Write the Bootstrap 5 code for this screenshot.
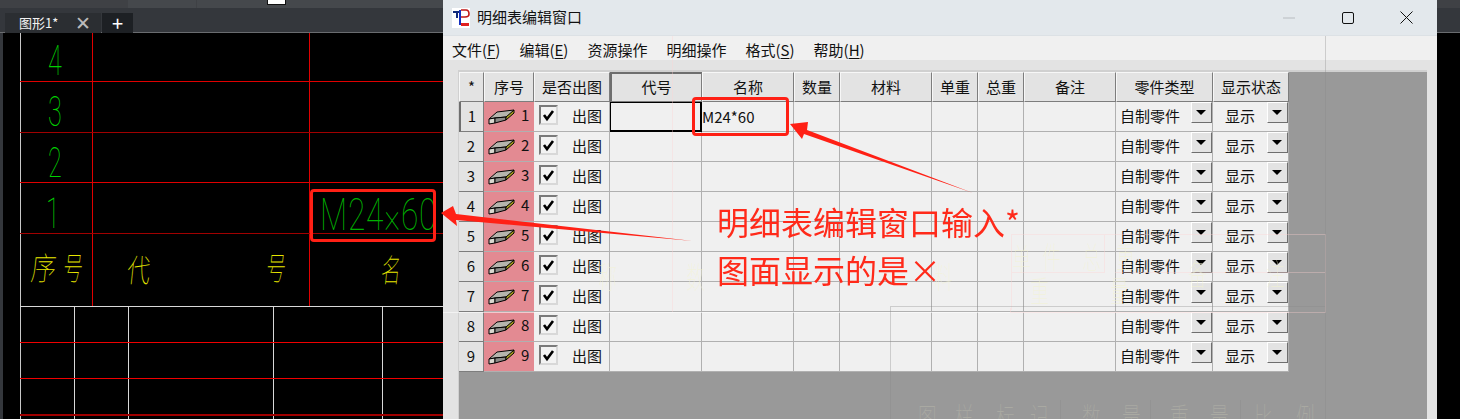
<!DOCTYPE html>
<html lang="zh-CN">
<head>
  <meta charset="UTF-8">
  <title>明细表编辑窗口</title>
  <link href="https://cdn.jsdelivr.net/npm/bootstrap@5.3.0/dist/css/bootstrap.min.css" rel="stylesheet">
  <style>
    html, body { height: 100%; }
    body { background: #000; overflow: hidden; font-family: "Noto Sans CJK SC", "Liberation Sans", sans-serif; }
    #desk { width: 1460px; height: 419px; }

    /* CAD 外框 */
    .cad-top { height: 33px; background: #34373c; border-bottom: 1px solid #6a6c70; }
    .cad-strip { height: 8px; background: #3f4145; overflow: hidden; }
    .strip-a { width: 120px; }
    .strip-b { width: 68px; margin-left: 8px; background: #45484c; }
    .strip-c { width: 880px; margin-left: 1px; background: #45484c; }
    .swatch { width: 19px; height: 5px; background: #fff; border: 1px solid #111; border-top: 0; margin-left: 70px; }
    .cad-tabs { height: 25px; padding: 5px 0 0 5px; }
    .cad-tab { width: 96px; height: 20px; background: #2b2e32; color: #f2f2f2; font-size: 13px; line-height: 20px; padding-left: 14px; }
    .cad-tab b { font-weight: 400; color: #bbb; font-size: 19px; margin-left: 17px; line-height: 18px; }
    .cad-add { width: 31px; height: 20px; margin-left: 1px; background: #1d2024; color: #fff; font-size: 20px; line-height: 19px; text-align: center; }
    .cad-paper { position: absolute; left: 0; top: 33px; }
    .cad-paper text { font-family: Roboto, "Noto Sans CJK SC", sans-serif; font-weight: 100; }
    .cad-paper .cn { font-family: "Noto Sans CJK SC", sans-serif; font-weight: 100; fill: #e6e600; }

    /* 明细表窗口 */
    #mxWin { position: absolute; left: 443px; top: -8px; width: 994px; height: 440px; background: #e3e3e3; border-radius: 8px; overflow: hidden; color: #111; font-size: 15px; }
    .win-title { height: 44px; padding-top: 8px; background: #e3e8ec; border-bottom: 1px solid #dce1e5; }
    .win-logo { margin-left: 9px; margin-right: 7px; }
    .win-btns svg { display: block; }
    .win-menu { height: 24px; background: #f0f0f0; line-height: 28px; padding-left: 9px; gap: 19px; }
    .win-menu u { text-underline-offset: 2px; }
    .grid-wrap { margin: 10px 10px 0 15px; height: 360px; background: #999; border-top: 2px solid #d0d0d0; border-left: 1px solid #d0d0d0; }
    .mx-grid { table-layout: fixed; width: 830px; border-collapse: separate; border-spacing: 0; background: #f0f0f0; }
    .mx-grid th, .mx-grid td { height: 30px; padding: 0; border-right: 1px solid #b0b0b0; border-bottom: 1px solid #b0b0b0; font-weight: 400; line-height: 1; vertical-align: middle; }
    .mx-grid th { background: #e3e3e3; text-align: center; border-right-color: #7d7d7d; border-bottom-color: #7d7d7d; border-top: 1px solid #f7f7f7; border-left: 1px solid #f7f7f7; padding-bottom: 2px; }
    .mx-grid th.cur { border-top: 2px solid #6e6e6e; border-left: 2px solid #6e6e6e; }
    .mx-grid td { background: #f0f0f0; }
    .mx-grid td.rowno { background: #e3e3e3; text-align: center; border-right-color: #7d7d7d; border-bottom-color: #7d7d7d; padding-bottom: 3px; }
    .mx-grid td.rowno.cur { border-left: 2px solid #6e6e6e; }
    .mx-grid td.pink { background: #e38a92; border-right: 0; }
    .mx-grid td.sel { box-shadow: inset 0 0 0 1px #000; border-right-color: #000; border-bottom-color: #000; }
    .cell-in { height: 29px; }
    .part-no { margin-left: 6px; margin-top: -4px; }
    .chk { width: 19px; height: 20px; margin-left: 5px; margin-top: 3px; background: #f3f3f3; border: 2px solid; border-color: #7a7a7a #d8d8d8 #d8d8d8 #7a7a7a; }
    .chk-txt { margin-left: 14px; margin-top: -3px; }
    .val { padding-left: 4px; padding-bottom: 5px; }
    .drop { width: 21px; height: 21px; background: #e3e3e3; border: 1px solid; border-color: #fff #6e6e6e #6e6e6e #fff; position: relative; margin-right: 0; margin-top: 0; }
    .drop::after { content: ""; position: absolute; left: 4px; top: 7px; border: 5px solid transparent; border-top: 5px solid #000; border-bottom: 0; }
    .sel-txt { margin-top: -3px; }

    /* 标注 */
    .mark-box { position: absolute; border: 3px solid #ff2015; border-radius: 4px; }
    #note { position: absolute; left: 717px; top: 197px; color: #ff2a1a; font-size: 32px; line-height: 48px; }
    #ghost, #arrows { position: absolute; left: 0; top: 0; pointer-events: none; }
    #ghost text { font-family: "Noto Sans CJK SC", sans-serif; font-weight: 100; fill: #f3f3cf; font-size: 30px; }
  </style>
</head>
<body>
<div id="desk" class="position-relative overflow-hidden">

  <!-- CAD 顶部 -->
  <div class="cad-top">
    <div class="cad-strip d-flex">
      <div class="strip-a"></div>
      <div class="strip-b"></div>
      <div class="strip-c"><div class="swatch"></div></div>
    </div>
    <div class="cad-tabs d-flex">
      <div class="cad-tab d-flex">图形1*<b>✕</b></div>
      <div class="cad-add">+</div>
    </div>
  </div>

  <!-- CAD 图纸 -->
  <svg class="cad-paper" width="450" height="386" viewBox="0 33 450 386">
    <rect x="0" y="33" width="3" height="386" fill="#34373c"/>
    <g stroke-width="1" fill="none" shape-rendering="crispEdges">
      <path stroke="#c8c8c8" d="M20.5 33V419"/>
      <path stroke="#e00000" d="M92.5 33V306M309.5 33V306M20 81.5H450M20 182.5H450"/>
      <path stroke="#a00000" d="M20 132.5H450M20 233.5H450"/>
      <path stroke="#d8d8d8" d="M20 306.5H450M74.5 306V419M128.5 306V419M273.5 306V419M382.5 306V419"/>
      <path stroke="#f00000" d="M20 342.5H450M20 378.5H450"/>
      <path stroke="#a00000" stroke-width="2" d="M20 415H450"/>
    </g>
    <g fill="#00d000" font-size="42">
      <text transform="translate(48 75) scale(.6 1)">4</text>
      <text transform="translate(48 126) scale(.6 1)">3</text>
      <text transform="translate(48 177) scale(.6 1)">2</text>
      <text transform="translate(46 228) scale(.6 1)">1</text>
    </g>
    <text fill="#00b000" font-size="44" transform="translate(320 230) scale(.72 1)" letter-spacing="1">M24×60</text>
    <g font-size="32" class="cn">
      <text class="cn" transform="translate(30 280) skewX(-6) scale(.78 1)">序</text>
      <text class="cn" transform="translate(62 280) skewX(-6) scale(.62 1)">号</text>
      <text class="cn" transform="translate(126 282) skewX(-6) scale(.72 1)">代</text>
      <text class="cn" transform="translate(265 280) skewX(-6) scale(.62 1)">号</text>
      <text class="cn" transform="translate(380 282) skewX(-6) scale(.62 1)">名</text>
    </g>
  </svg>

  <!-- 明细表编辑窗口 -->
  <div id="mxWin" class="d-flex flex-column">
    <div class="win-title d-flex align-items-center">
      <svg class="win-logo" width="18" height="20" viewBox="0 0 18 20">
        <rect width="18" height="20" fill="#fff"/>
        <path d="M1 4H9M5 4V10" stroke="#102a7a" stroke-width="2" fill="none"/>
        <path d="M9 2H14Q17 2 17 6Q17 9 13 9H9" stroke="#c01818" stroke-width="1.6" fill="none"/>
        <path d="M8 2V17" stroke="#1530c0" stroke-width="2"/>
        <rect x="9" y="15" width="8" height="3" fill="#e02020"/>
      </svg>
      <span>明细表编辑窗口</span>
      <div class="win-btns d-flex ms-auto align-items-center">
        <svg width="12" height="2" style="margin-right:47px"><path d="M0 1H12" stroke="#b8bcc0"/></svg>
        <svg width="12" height="12" style="margin-right:46px"><rect x=".5" y=".5" width="11" height="11" rx="1.5" fill="none" stroke="#111"/></svg>
        <svg width="13" height="13" style="margin-right:24px"><path d="M.5.5L12.5 12.5M12.5.5L.5 12.5" stroke="#111"/></svg>
      </div>
    </div>
    <div class="win-menu d-flex">
      <span>文件(<u>F</u>)</span><span>编辑(<u>E</u>)</span><span>资源操作</span><span>明细操作</span><span>格式(<u>S</u>)</span><span>帮助(<u>H</u>)</span>
    </div>
    <div class="grid-wrap">
      <table class="mx-grid">
        <colgroup>
          <col style="width:25px"><col style="width:50px"><col style="width:76px"><col style="width:92px"><col style="width:92px"><col style="width:46px"><col style="width:92px"><col style="width:46px"><col style="width:46px"><col style="width:92px"><col style="width:97px"><col style="width:76px">
        </colgroup>
        <thead>
          <tr><th>*</th><th>序号</th><th>是否出图</th><th class="cur">代号</th><th>名称</th><th>数量</th><th>材料</th><th>单重</th><th>总重</th><th>备注</th><th>零件类型</th><th>显示状态</th></tr>
        </thead>
        <tbody id="rows"></tbody>
      </table>
    </div>
  </div>

  <!-- 透出的底图 -->
  <svg id="ghost" width="1460" height="419">
    <g stroke="#ffffff" stroke-opacity=".55" fill="none" shape-rendering="crispEdges">
      <path d="M443 312.5H1289"/>
    </g>
    <g stroke="#ffd0d0" stroke-opacity=".35" fill="none" shape-rendering="crispEdges">
      <path d="M672.5 36V312M1011.5 234H1325V312H1011zM1104 234V272H1011M1115 272H1325"/>
      <path d="M1325 36V419" stroke="#8a8a8a"/>
      <path stroke="#8a8a8a" d="M890 306H1325M890 306V419M890 420H1325M1060 400V419M1150 400V419M1240 400V419"/>
    </g>
    <g opacity=".55">
      <text transform="translate(598 288) scale(.62 1)">称</text>
      <text transform="translate(686 288) scale(.62 1)">数</text>
      <text transform="translate(934 288) scale(.62 1)">料</text>
      <text transform="translate(1012 270) scale(.62 1)">单</text>
      <text transform="translate(1042 268) scale(.62 1)">件</text>
      <text transform="translate(1082 268) scale(.62 1)">总</text>
      <text transform="translate(1116 268) scale(.62 1)">重</text>
      <text transform="translate(1030 302) scale(.62 1)">重</text>
      <text transform="translate(1110 302) scale(.62 1)">量</text>
      <text transform="translate(1188 285) scale(.62 1)">备</text>
      <text transform="translate(1266 285) scale(.62 1)">注</text>
    </g>
    <g opacity=".18">
      <text transform="translate(918 429) scale(.62 1)">图</text>
      <text transform="translate(955 429) scale(.62 1)">样</text>
      <text transform="translate(996 429) scale(.62 1)">标</text>
      <text transform="translate(1030 429) scale(.62 1)">记</text>
      <text transform="translate(1082 429) scale(.62 1)">数</text>
      <text transform="translate(1122 429) scale(.62 1)">量</text>
      <text transform="translate(1170 429) scale(.62 1)">重</text>
      <text transform="translate(1210 429) scale(.62 1)">量</text>
      <text transform="translate(1254 429) scale(.62 1)">比</text>
      <text transform="translate(1296 429) scale(.62 1)">例</text>
    </g>
  </svg>

  <!-- 标注 -->
  <div class="mark-box" style="left:310px;top:189px;width:126px;height:53px"></div>
  <div class="mark-box" style="left:692px;top:97px;width:97px;height:39px"></div>
  <svg id="arrows" width="1460" height="419">
    <polygon fill="#ff2015" points="973,193 807,130 808,122 790,124 802,139 804,134"/>
    <polygon fill="#ff2015" points="693,241 456,214 453,206 441,213 457,226 456,220"/>
  </svg>
  <div id="note">明细表编辑窗口输入*<br>图面显示的是×</div>
</div>

<script src="https://cdn.jsdelivr.net/npm/bootstrap@5.3.0/dist/js/bootstrap.bundle.min.js"></script>
<script>
  // 明细行
  const partIcon = `<svg width="27" height="17" viewBox="0 0 27 17" class="ms-1 flex-shrink-0">
    <polygon points="1,11 9,4 26,2 19,9 18,9 7,10" fill="#b5b5ad" stroke="#000"/>
    <polygon points="1,11 7,10 7,15 1,16" fill="#d8d8d0" stroke="#000"/>
    <polygon points="7,10 18,9 18,12 7,15" fill="#8c8c88" stroke="#000"/>
    <polygon points="18,9 26,2 26,5 18,12" fill="#a8a020" stroke="#000"/>
  </svg>`;
  const check = `<svg width="15" height="16" viewBox="0 0 15 16"><path d="M3 8L6 12L12 4" fill="none" stroke="#000" stroke-width="2.6"/></svg>`;
  const blanks = n => '<td></td>'.repeat(n);
  let html = '';
  for (let i = 1; i <= 9; i++) {
    const first = i === 1;
    html += `<tr>
      <td class="rowno${first ? ' cur' : ''}">${i}</td>
      <td class="pink"><div class="d-flex align-items-center cell-in">${partIcon}<span class="part-no">${i}</span></div></td>
      <td><div class="d-flex cell-in"><div class="chk d-flex align-items-center justify-content-center">${check}</div><span class="chk-txt align-self-center">出图</span></div></td>
      <td${first ? ' class="sel"' : ''}></td>
      <td class="val">${first ? 'M24*60' : ''}</td>
      ${blanks(5)}
      <td><div class="d-flex align-items-start justify-content-between cell-in ps-1"><span class="sel-txt align-self-center">自制零件</span><div class="drop"></div></div></td>
      <td><div class="d-flex align-items-start justify-content-between cell-in ps-2 ms-1"><span class="sel-txt align-self-center">显示</span><div class="drop"></div></div></td>
    </tr>`;
  }
  document.getElementById('rows').innerHTML = html;
</script>
</body>
</html>
